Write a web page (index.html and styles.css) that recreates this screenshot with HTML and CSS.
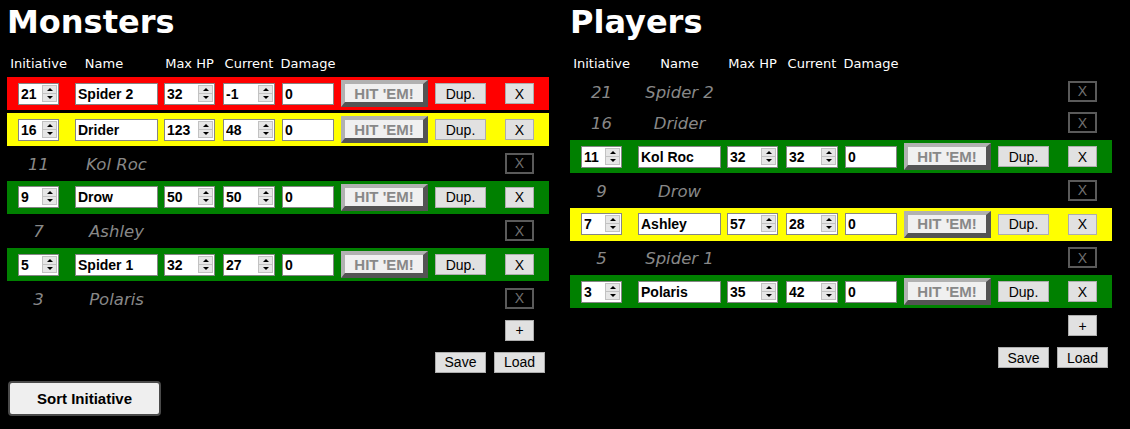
FILE: index.html
```html
<!DOCTYPE html>
<html>
<head>
<meta charset="utf-8">
<title>Initiative Tracker</title>
<link rel="stylesheet" href="styles.css">
</head>
<body>
<div class="app">
  <section class="panel">
    <h1 class="title">Monsters</h1>
    <div class="cols head">
      <span class="c1">Initiative</span><span class="c2 name-left">Name</span><span class="c3">Max HP</span><span class="c4">Current</span><span class="c5">Damage</span>
    </div>
    <div class="rows">
      <div class="cols row live red">
        <span class="field c1"><input value="21"><span class="spin"><i class="up"></i><i class="dn"></i></span></span>
        <span class="field c2"><input value="Spider 2"></span>
        <span class="field c3"><input value="32"><span class="spin"><i class="up"></i><i class="dn"></i></span></span>
        <span class="field c4"><input value="-1"><span class="spin"><i class="up"></i><i class="dn"></i></span></span>
        <span class="field c5"><input value="0"></span>
        <button class="hit c6">HIT 'EM!</button>
        <button class="btn c7">Dup.</button>
        <button class="btn c8">X</button>
      </div>
      <div class="cols row live yellow">
        <span class="field c1"><input value="16"><span class="spin"><i class="up"></i><i class="dn"></i></span></span>
        <span class="field c2"><input value="Drider"></span>
        <span class="field c3"><input value="123"><span class="spin"><i class="up"></i><i class="dn"></i></span></span>
        <span class="field c4"><input value="48"><span class="spin"><i class="up"></i><i class="dn"></i></span></span>
        <span class="field c5"><input value="0"></span>
        <button class="hit c6">HIT 'EM!</button>
        <button class="btn c7">Dup.</button>
        <button class="btn c8">X</button>
      </div>
      <div class="cols row idle">
        <span class="ghost c1">11</span><span class="ghost c2">Kol Roc</span><button class="off c8">X</button>
      </div>
      <div class="cols row live green">
        <span class="field c1"><input value="9"><span class="spin"><i class="up"></i><i class="dn"></i></span></span>
        <span class="field c2"><input value="Drow"></span>
        <span class="field c3"><input value="50"><span class="spin"><i class="up"></i><i class="dn"></i></span></span>
        <span class="field c4"><input value="50"><span class="spin"><i class="up"></i><i class="dn"></i></span></span>
        <span class="field c5"><input value="0"></span>
        <button class="hit c6">HIT 'EM!</button>
        <button class="btn c7">Dup.</button>
        <button class="btn c8">X</button>
      </div>
      <div class="cols row idle">
        <span class="ghost c1">7</span><span class="ghost c2">Ashley</span><button class="off c8">X</button>
      </div>
      <div class="cols row live green">
        <span class="field c1"><input value="5"><span class="spin"><i class="up"></i><i class="dn"></i></span></span>
        <span class="field c2"><input value="Spider 1"></span>
        <span class="field c3"><input value="32"><span class="spin"><i class="up"></i><i class="dn"></i></span></span>
        <span class="field c4"><input value="27"><span class="spin"><i class="up"></i><i class="dn"></i></span></span>
        <span class="field c5"><input value="0"></span>
        <button class="hit c6">HIT 'EM!</button>
        <button class="btn c7">Dup.</button>
        <button class="btn c8">X</button>
      </div>
      <div class="cols row idle">
        <span class="ghost c1">3</span><span class="ghost c2">Polaris</span><button class="off c8">X</button>
      </div>
    </div>
    <div class="add"><button class="btn small">+</button></div>
    <div class="io"><button class="btn wide">Save</button><button class="btn wide">Load</button></div>
    <button class="sort">Sort Initiative</button>
  </section>

  <section class="panel">
    <h1 class="title">Players</h1>
    <div class="cols head">
      <span class="c1">Initiative</span><span class="c2">Name</span><span class="c3">Max HP</span><span class="c4">Current</span><span class="c5">Damage</span>
    </div>
    <div class="rows">
      <div class="cols row idle">
        <span class="ghost c1">21</span><span class="ghost c2">Spider 2</span><button class="off c8">X</button>
      </div>
      <div class="cols row idle">
        <span class="ghost c1">16</span><span class="ghost c2">Drider</span><button class="off c8">X</button>
      </div>
      <div class="cols row live green">
        <span class="field c1"><input value="11"><span class="spin"><i class="up"></i><i class="dn"></i></span></span>
        <span class="field c2"><input value="Kol Roc"></span>
        <span class="field c3"><input value="32"><span class="spin"><i class="up"></i><i class="dn"></i></span></span>
        <span class="field c4"><input value="32"><span class="spin"><i class="up"></i><i class="dn"></i></span></span>
        <span class="field c5"><input value="0"></span>
        <button class="hit c6">HIT 'EM!</button>
        <button class="btn c7">Dup.</button>
        <button class="btn c8">X</button>
      </div>
      <div class="cols row idle">
        <span class="ghost c1">9</span><span class="ghost c2">Drow</span><button class="off c8">X</button>
      </div>
      <div class="cols row live yellow">
        <span class="field c1"><input value="7"><span class="spin"><i class="up"></i><i class="dn"></i></span></span>
        <span class="field c2"><input value="Ashley"></span>
        <span class="field c3"><input value="57"><span class="spin"><i class="up"></i><i class="dn"></i></span></span>
        <span class="field c4"><input value="28"><span class="spin"><i class="up"></i><i class="dn"></i></span></span>
        <span class="field c5"><input value="0"></span>
        <button class="hit c6">HIT 'EM!</button>
        <button class="btn c7">Dup.</button>
        <button class="btn c8">X</button>
      </div>
      <div class="cols row idle">
        <span class="ghost c1">5</span><span class="ghost c2">Spider 1</span><button class="off c8">X</button>
      </div>
      <div class="cols row live green">
        <span class="field c1"><input value="3"><span class="spin"><i class="up"></i><i class="dn"></i></span></span>
        <span class="field c2"><input value="Polaris"></span>
        <span class="field c3"><input value="35"><span class="spin"><i class="up"></i><i class="dn"></i></span></span>
        <span class="field c4"><input value="42"><span class="spin"><i class="up"></i><i class="dn"></i></span></span>
        <span class="field c5"><input value="0"></span>
        <button class="hit c6">HIT 'EM!</button>
        <button class="btn c7">Dup.</button>
        <button class="btn c8">X</button>
      </div>
    </div>
    <div class="add"><button class="btn small">+</button></div>
    <div class="io"><button class="btn wide">Save</button><button class="btn wide">Load</button></div>
  </section>
</div>
</body>
</html>
```

FILE: styles.css
```css
html, body {
  margin: 0;
  padding: 0;
  background: #000;
}

body {
  font-family: "DejaVu Sans", Verdana, sans-serif;
  color: #fff;
}

.app {
  display: flex;
  align-items: flex-start;
  gap: 21px;
  padding-left: 7px;
}

.panel {
  width: 542px;
  flex: none;
}

.title {
  margin: 4px 0 0;
  font: bold 32px/37px "DejaVu Sans", Verdana, sans-serif;
  color: #fff;
}

/* shared column grid */
.cols {
  display: grid;
  grid-template-columns: 52px 99px 57px 60px 59px 94px 58px 48px;
  align-items: center;
}

.cols > * {
  grid-row: 1;
  justify-self: end;
  box-sizing: border-box;
}

.c1 { grid-column: 1; width: 41px; }
.c2 { grid-column: 2; width: 83px; }
.c3 { grid-column: 3; width: 51px; }
.c4 { grid-column: 4; width: 52px; }
.c5 { grid-column: 5; width: 52px; }
.c6 { grid-column: 6; width: 87px; }
.c7 { grid-column: 7; width: 51px; }
.c8 { grid-column: 8; width: 29px; }

.head {
  margin: 15px 0 6px;
  height: 15px;
  font-size: 13px;
  line-height: 15px;
  color: #fff;
}

.head > span {
  display: flex;
  justify-content: center;
  white-space: nowrap;
}

.head > .name-left {
  padding-right: 25px;
}

.rows {
  display: flex;
  flex-direction: column;
  gap: 3px;
}

.row.live {
  height: 33px;
}

.row.idle {
  height: 28.5px;
}

.red { background: #ff0000; }
.yellow { background: #ffff00; }
.green { background: #008000; }

/* inputs */
.field {
  display: flex;
  align-items: center;
  height: 22px;
  border: 1px solid #858585;
  background: #fff;
}

.field input {
  flex: 1;
  width: 0;
  min-width: 0;
  height: 100%;
  margin: 0;
  padding: 0 0 0 2px;
  border: 0;
  outline: none;
  background: transparent;
  color: #000;
  font: bold 14px "Liberation Sans", Arial, sans-serif;
}

.spin {
  flex: none;
  box-sizing: border-box;
  width: 15px;
  height: 17px;
  margin: 0 1px 1px 0;
  display: flex;
  flex-direction: column;
  border: 1px solid #c2c2c2;
  background: #e6e6e6;
}

.spin i {
  flex: 1;
  display: flex;
  align-items: center;
  justify-content: center;
}

.spin i + i {
  border-top: 1px solid #c2c2c2;
}

.spin i::before {
  content: "";
  border-left: 3px solid transparent;
  border-right: 3px solid transparent;
}

.spin .up::before { border-bottom: 3px solid #000; }
.spin .dn::before { border-top: 3px solid #000; }

/* buttons */
.hit {
  height: 27px;
  padding: 0;
  border-style: solid;
  border-width: 4px 5px 5px 4px;
  border-color: #b1b1b1 #545454 #545454 #b1b1b1;
  background: #f0f0f0;
  color: #888;
  font: bold 15px "Liberation Sans", Arial, sans-serif;
}

.btn {
  height: 21px;
  padding: 0;
  border: 1px solid #adadad;
  background: #e1e1e1;
  color: #000;
  font: 14px "Liberation Sans", Arial, sans-serif;
}

.off {
  height: 21px;
  padding: 0;
  border: 2px solid #5a5a5a;
  background: transparent;
  color: #707070;
  font: 14px "Liberation Sans", Arial, sans-serif;
}

.ghost {
  display: flex;
  justify-content: center;
  white-space: nowrap;
  padding-top: 2px;
  font: oblique 16.5px "DejaVu Sans", Verdana, sans-serif;
  color: #888;
}

.add {
  display: flex;
  justify-content: flex-end;
  padding-right: 15px;
  margin-top: 7px;
}

.small { width: 29px; }

.io {
  display: flex;
  justify-content: flex-end;
  gap: 8px;
  padding-right: 4px;
  margin-top: 11px;
}

.wide { width: 51px; }

.sort {
  display: block;
  box-sizing: border-box;
  width: 153px;
  height: 35px;
  margin: 8px 0 0 1px;
  padding: 0;
  border: 2px solid #4a4a4a;
  border-radius: 4px;
  background: #efefef;
  color: #000;
  font: bold 15px "Liberation Sans", Arial, sans-serif;
}
```
